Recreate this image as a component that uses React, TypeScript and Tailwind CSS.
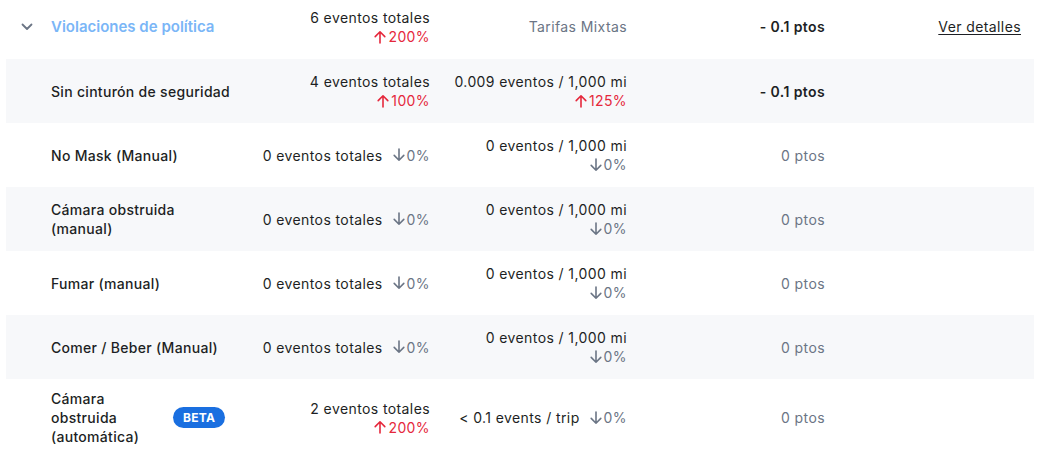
import React from 'react';

type Change = { dir: 'up' | 'flat'; value: string };

type Row = {
  name: string;
  nameWidth?: string;
  beta?: boolean;
  total: string;
  totalChange: Change;
  rate: string;
  rateChange: Change;
  points: string;
  strong?: boolean;
};

const rows: Row[] = [
  {
    name: 'Sin cinturón de seguridad',
    total: '4 eventos totales',
    totalChange: { dir: 'up', value: '100%' },
    rate: '0.009 eventos / 1,000 mi',
    rateChange: { dir: 'up', value: '125%' },
    points: '- 0.1 ptos',
    strong: true,
  },
  {
    name: 'No Mask (Manual)',
    total: '0 eventos totales',
    totalChange: { dir: 'flat', value: '0%' },
    rate: '0 eventos / 1,000 mi',
    rateChange: { dir: 'flat', value: '0%' },
    points: '0 ptos',
  },
  {
    name: 'Cámara obstruida (manual)',
    nameWidth: 'max-w-[160px]',
    total: '0 eventos totales',
    totalChange: { dir: 'flat', value: '0%' },
    rate: '0 eventos / 1,000 mi',
    rateChange: { dir: 'flat', value: '0%' },
    points: '0 ptos',
  },
  {
    name: 'Fumar (manual)',
    total: '0 eventos totales',
    totalChange: { dir: 'flat', value: '0%' },
    rate: '0 eventos / 1,000 mi',
    rateChange: { dir: 'flat', value: '0%' },
    points: '0 ptos',
  },
  {
    name: 'Comer / Beber (Manual)',
    total: '0 eventos totales',
    totalChange: { dir: 'flat', value: '0%' },
    rate: '0 eventos / 1,000 mi',
    rateChange: { dir: 'flat', value: '0%' },
    points: '0 ptos',
  },
  {
    name: 'Cámara obstruida (automática)',
    nameWidth: 'w-[110px]',
    beta: true,
    total: '2 eventos totales',
    totalChange: { dir: 'up', value: '200%' },
    rate: '< 0.1 events / trip',
    rateChange: { dir: 'flat', value: '0%' },
    points: '0 ptos',
  },
];

const Arrow = ({ up }: { up: boolean }) => (
  <svg width="12" height="14" viewBox="0 0 12 14" className={up ? '' : 'rotate-180'}>
    <path
      d="M6 13V1.8M1.2 6.6 6 1.8l4.8 4.8"
      fill="none"
      stroke="currentColor"
      strokeWidth="1.6"
      strokeLinecap="round"
      strokeLinejoin="round"
    />
  </svg>
);

const ChangeTag = ({ change }: { change: Change }) => (
  <span
    className={`flex items-center gap-[2px] ${change.dir === 'up' ? 'text-[#e5283c]' : 'text-[#6b7585]'}`}
  >
    <Arrow up={change.dir === 'up'} />
    {change.value}
  </span>
);

const Stacked = ({ label, change }: { label: string; change: Change }) => (
  <div className="flex flex-col items-end">
    <span>{label}</span>
    <ChangeTag change={change} />
  </div>
);

const Inline = ({ label, change }: { label: string; change: Change }) => (
  <div className="flex items-center justify-end gap-[10px]">
    <span>{label}</span>
    <ChangeTag change={change} />
  </div>
);

const App = () => {
  return (
    <div
      className="w-[1040px] h-[457px] overflow-hidden bg-white text-[14px] leading-[19px] tracking-[0.4px] text-[#1d1f24]"
      style={{ fontFamily: 'Inter, "Noto Sans", sans-serif' }}
    >
      {/* category header */}
      <div className="mx-[6px] flex h-[59px] pt-[8px]">
        <div className="flex w-[245px] items-start pt-[9px]">
          <svg width="12" height="8" viewBox="0 0 12 8" className="ml-[15px] mt-[6px] text-[#6b7585]">
            <path d="M1.5 1.5 6 6l4.5-4.5" fill="none" stroke="currentColor" strokeWidth="1.8" strokeLinecap="round" strokeLinejoin="round" />
          </svg>
          <span className="ml-[18px] text-[15px] font-semibold tracking-normal text-[#7ab6f7]">
            Violaciones de política
          </span>
        </div>
        <div className="w-[179px]">
          <Stacked label="6 eventos totales" change={{ dir: 'up', value: '200%' }} />
        </div>
        <div className="w-[197px] pt-[9px] text-right text-[#6b7585]">Tarifas Mixtas</div>
        <div className="w-[198px] pt-[9px] text-right font-semibold">- 0.1 ptos</div>
        <div className="w-[196px] pt-[9px] text-right">
          <a className="underline underline-offset-2">Ver detalles</a>
        </div>
      </div>

      {rows.map((row, i) => (
        <div
          key={row.name}
          className={`mx-[6px] flex min-h-[64px] items-center py-[10px] pl-[45px] ${i % 2 === 0 ? 'bg-[#f7f8fa]' : 'bg-white'}`}
        >
          <div className="flex w-[200px] items-center gap-[12px]">
            <span className={`font-medium tracking-[0.3px] ${row.nameWidth ?? ''}`}>{row.name}</span>
            {row.beta && (
              <span className="rounded-full bg-[#1a6fe0] px-[10px] py-[1px] text-[12px] font-bold tracking-wide text-white">
                BETA
              </span>
            )}
          </div>
          <div className="w-[179px]">
            {row.totalChange.dir === 'up' ? (
              <Stacked label={row.total} change={row.totalChange} />
            ) : (
              <Inline label={row.total} change={row.totalChange} />
            )}
          </div>
          <div className="w-[197px]">
            {row.rate.includes('trip') ? (
              <Inline label={row.rate} change={row.rateChange} />
            ) : (
              <Stacked label={row.rate} change={row.rateChange} />
            )}
          </div>
          <div className={`w-[198px] text-right ${row.strong ? 'font-semibold' : 'text-[#6b7585]'}`}>
            {row.points}
          </div>
          <div className="w-[196px]" />
        </div>
      ))}
    </div>
  );
};

export default App;
